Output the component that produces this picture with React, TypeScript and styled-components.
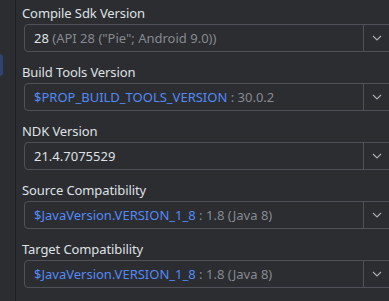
import React from "react";
import styled, { createGlobalStyle } from "styled-components";

const Global = createGlobalStyle`
  html, body { margin: 0; padding: 0; background: #2b2d30; }
  body { font-family: "Noto Sans", "Open Sans", sans-serif; -webkit-font-smoothing: antialiased; }
`;

const Page = styled.div`
  display: flex;
  width: 389px;
  height: 301px;
  overflow: hidden;
  background: #2b2d30;
`;

const Sidebar = styled.div`
  position: relative;
  width: 15px;
  flex: none;
  border-right: 1px solid #1e1f22;
  background: #2b2d30;
`;

const Marker = styled.div`
  position: absolute;
  left: -4px;
  top: 54px;
  width: 7px;
  height: 22px;
  border-radius: 4px;
  background: #2e436e;
`;

const Main = styled.div`
  flex: 1;
  display: flex;
  flex-direction: column;
  gap: 12px;
  padding: 5px 0 0 6px;
  overflow: hidden;
`;

const Field = styled.div`
  display: flex;
  flex-direction: column;
  gap: 3px;
`;

const Label = styled.div`
  font-size: 13px;
  line-height: 16px;
  color: #dfe1e5;
  white-space: nowrap;
  letter-spacing: -0.1px;
`;

const Combo = styled.div`
  display: flex;
  align-items: stretch;
  box-sizing: border-box;
  height: 28px;
  width: 370px;
  margin-left: 2px;
  border: 1px solid #4e5157;
  border-radius: 4px;
  background: #2b2d30;
`;

const Value = styled.div`
  flex: 1;
  display: flex;
  align-items: center;
  padding-left: 9px;
  font-size: 13px;
  overflow: hidden;
`;

const Text = styled.span`
  white-space: pre;
`;

const Span = styled.span<{ $tone: "main" | "dim" | "link" }>`
  color: ${(p) => (p.$tone === "main" ? "#dfe1e5" : p.$tone === "dim" ? "#868a91" : "#548af7")};
`;

const Arrow = styled.div`
  width: 30px;
  flex: none;
  border-left: 1px solid #4e5157;
  display: flex;
  align-items: center;
  padding-left: 8px;
  box-sizing: border-box;
`;

const Chevron = () => (
  <svg width="10" height="6" viewBox="0 0 10 6">
    <path d="M1 1 L5 5 L9 1" fill="none" stroke="#a8abb0" strokeWidth="1.2" />
  </svg>
);

type Part = [string, "main" | "dim" | "link"];

const fields: { label: string; parts: Part[] }[] = [
  { label: "Compile Sdk Version", parts: [["28 ", "main"], ['(API 28 ("Pie"; Android 9.0))', "dim"]] },
  { label: "Build Tools Version", parts: [["$PROP_BUILD_TOOLS_VERSION", "link"], [" : 30.0.2", "dim"]] },
  { label: "NDK Version", parts: [["21.4.7075529", "main"]] },
  { label: "Source Compatibility", parts: [["$JavaVersion.VERSION_1_8", "link"], [" : 1.8 (Java 8)", "dim"]] },
  { label: "Target Compatibility", parts: [["$JavaVersion.VERSION_1_8", "link"], [" : 1.8 (Java 8)", "dim"]] },
];

export default function App() {
  return (
    <Page>
      <Global />
      <Sidebar>
        <Marker />
      </Sidebar>
      <Main>
        {fields.map((f) => (
          <Field key={f.label}>
            <Label>{f.label}</Label>
            <Combo>
              <Value>
                <Text>
                  {f.parts.map(([t, tone], i) => (
                    <Span key={i} $tone={tone}>
                      {t}
                    </Span>
                  ))}
                </Text>
              </Value>
              <Arrow>
                <Chevron />
              </Arrow>
            </Combo>
          </Field>
        ))}
      </Main>
    </Page>
  );
}
